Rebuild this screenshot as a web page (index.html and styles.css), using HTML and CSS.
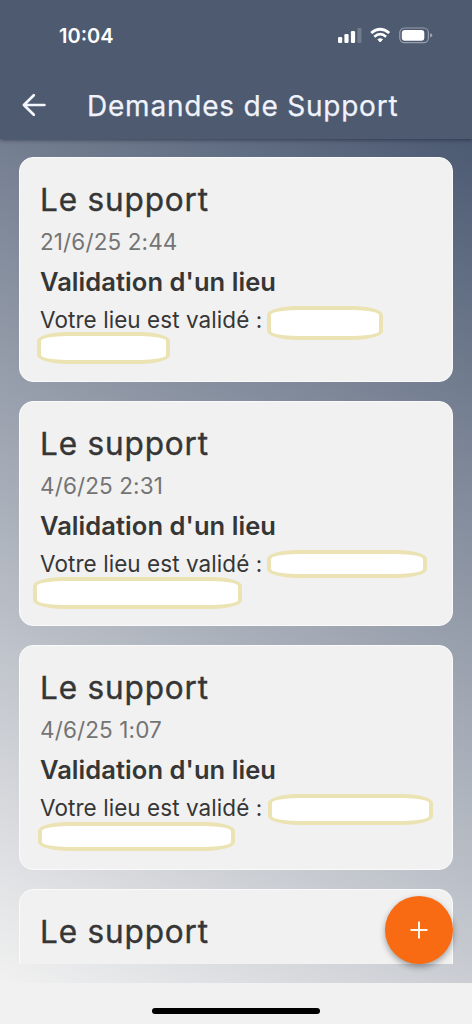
FILE: index.html
```html
<!DOCTYPE html>
<html lang="fr">
<head>
<meta charset="utf-8">
<title>Demandes de Support</title>
<link rel="stylesheet" href="styles.css">
</head>
<body>
<div class="screen">
  <header class="header">
    <div class="status">
      <span class="time">10:04</span>
      <svg class="status-icons" width="96" height="18" viewBox="0 0 96 18">
        <g fill="#fff">
          <rect x="0" y="10" width="4.2" height="6" rx="1.2"/>
          <rect x="6.4" y="7" width="4.2" height="9" rx="1.2"/>
          <rect x="12.9" y="4" width="4.2" height="12" rx="1.2"/>
          <rect x="19.3" y="1" width="4.2" height="15" rx="1.2" opacity=".2"/>
          <path d="M39.9 12.4Q42.2 10.9 44.5 12.4L42.2 15Z" stroke="#fff" stroke-width="1" stroke-linejoin="round"/>
        </g>
        <g fill="none" stroke="#fff" stroke-width="2.7">
          <path d="M33.2 6Q42.2 -1.5 51.2 6"/>
          <path d="M36.3 9.7Q42.2 4.7 48.1 9.7"/>
        </g>
        <rect x="61.8" y="1" width="28.6" height="14.6" rx="4.6" fill="none" stroke="#fff" stroke-opacity=".42" stroke-width="1.2"/>
        <rect x="63.8" y="3" width="22.5" height="10.7" rx="3" fill="#fff"/>
        <path d="M92.2 6.2Q94.2 6.8 94.2 8.3T92.2 10.4Z" fill="#fff" opacity=".5"/>
      </svg>
    </div>
    <div class="toolbar">
      <svg class="back" width="26" height="26" viewBox="0 0 26 26" fill="none" stroke="#f4f6fc" stroke-width="2.7" stroke-linecap="round" stroke-linejoin="round"><path d="M23.4 13H3M12.8 3.2L2.9 13L12.8 22.8"/></svg>
      <h1 class="title">Demandes de Support</h1>
    </div>
  </header>
  <main class="content">
    <div class="list">
      <article class="card">
        <h2 class="sender">Le support</h2>
        <p class="date">21/6/25 2:44</p>
        <h3 class="subject">Validation d'un lieu</h3>
        <p class="message">Votre lieu est validé :</p>
        <span class="mask mask-1a"></span><span class="mask mask-1b"></span>
      </article>
      <article class="card">
        <h2 class="sender">Le support</h2>
        <p class="date">4/6/25 2:31</p>
        <h3 class="subject">Validation d'un lieu</h3>
        <p class="message">Votre lieu est validé :</p>
        <span class="mask mask-2a"></span><span class="mask mask-2b"></span>
      </article>
      <article class="card">
        <h2 class="sender">Le support</h2>
        <p class="date">4/6/25 1:07</p>
        <h3 class="subject">Validation d'un lieu</h3>
        <p class="message">Votre lieu est validé :</p>
        <span class="mask mask-3a"></span><span class="mask mask-3b"></span>
      </article>
      <article class="card">
        <h2 class="sender">Le support</h2>
      </article>
    </div>
    <button class="fab" aria-label="Ajouter"><svg width="18" height="18" viewBox="0 0 18 18" stroke="#fff8ec" stroke-width="2"><path d="M9 .5V17.5M.5 9H17.5"/></svg></button>
  </main>
  <footer class="footer"><div class="home-bar"></div></footer>
</div>
</body>
</html>
```
FILE: styles.css
```css
* { box-sizing: border-box; margin: 0; padding: 0; }
body { font-family: Inter, "Liberation Sans", sans-serif; background: #f1f1f1; }
.screen { width: 472px; height: 1024px; display: flex; flex-direction: column; overflow: hidden; }

.header { position: relative; z-index: 1; height: 139px; flex: none; background: #4d5a70; box-shadow: 0 1px 4px rgba(25, 32, 48, .6); }
.status { height: 71px; display: flex; justify-content: space-between; align-items: center; padding: 0 38px 0 59px; }
.time { color: #fff; font-size: 20px; font-weight: 600; line-height: 24px; }
.status-icons { display: block; }
.toolbar { height: 68px; display: flex; align-items: center; padding-left: 21px; gap: 40px; }
.back { flex: none; }
.title { padding-top: 2px; color: #f0f3fb; font-size: 28px; font-weight: 400; line-height: 36px; letter-spacing: .78px; white-space: nowrap; -webkit-text-stroke: .25px #f0f3fb; }

.content { position: relative; flex: none; height: 844px; padding: 18px 19px 19px; background: linear-gradient(209.2deg, #4c5a72, #f1f1f1); }
.list { height: 807px; overflow: hidden; display: flex; flex-direction: column; gap: 19px; }
.card { position: relative; flex: none; height: 225px; padding: 21px 20px 20px; border: 1px solid #fafafa; border-radius: 14px; background: #f1f1f1; color: #363636; }
.sender { font-size: 31.5px; font-weight: 400; line-height: 42px; letter-spacing: .85px; -webkit-text-stroke: .4px #363636; }
.date { margin-top: 6px; font-size: 22.5px; line-height: 30px; letter-spacing: .12px; color: #747474; }
.subject { margin-top: 8px; font-size: 25.5px; font-weight: 600; line-height: 34px; letter-spacing: .06px; }
.message { margin-top: 6px; font-size: 22.5px; line-height: 30px; letter-spacing: .06px; white-space: nowrap; }

/* Masks drawn over private words in the messages */
.mask { position: absolute; background: #fff; border: 4px solid #ebe3b3; border-radius: 30px / 9px; }
.mask-1a { left: 247px; top: 148px; width: 116px; height: 34px; }
.mask-1b { left: 17px; top: 174px; width: 133px; height: 32px; }
.mask-2a { left: 247px; top: 148px; width: 160px; height: 28px; }
.mask-2b { left: 13px; top: 175px; width: 209px; height: 32px; }
.mask-3a { left: 248px; top: 148px; width: 165px; height: 31px; }
.mask-3b { left: 18px; top: 176px; width: 197px; height: 29px; }

.fab { position: absolute; right: 19px; bottom: 19px; width: 68px; height: 68px; border: 0; border-radius: 50%; background: #f86b12; box-shadow: 0 3px 6px rgba(0, 0, 0, .35); display: flex; align-items: center; justify-content: center; }
.footer { flex: 1; display: flex; justify-content: center; padding-top: 25px; background: #f1f1f1; }
.home-bar { width: 168px; height: 6px; border-radius: 3px; background: #000; }
```
